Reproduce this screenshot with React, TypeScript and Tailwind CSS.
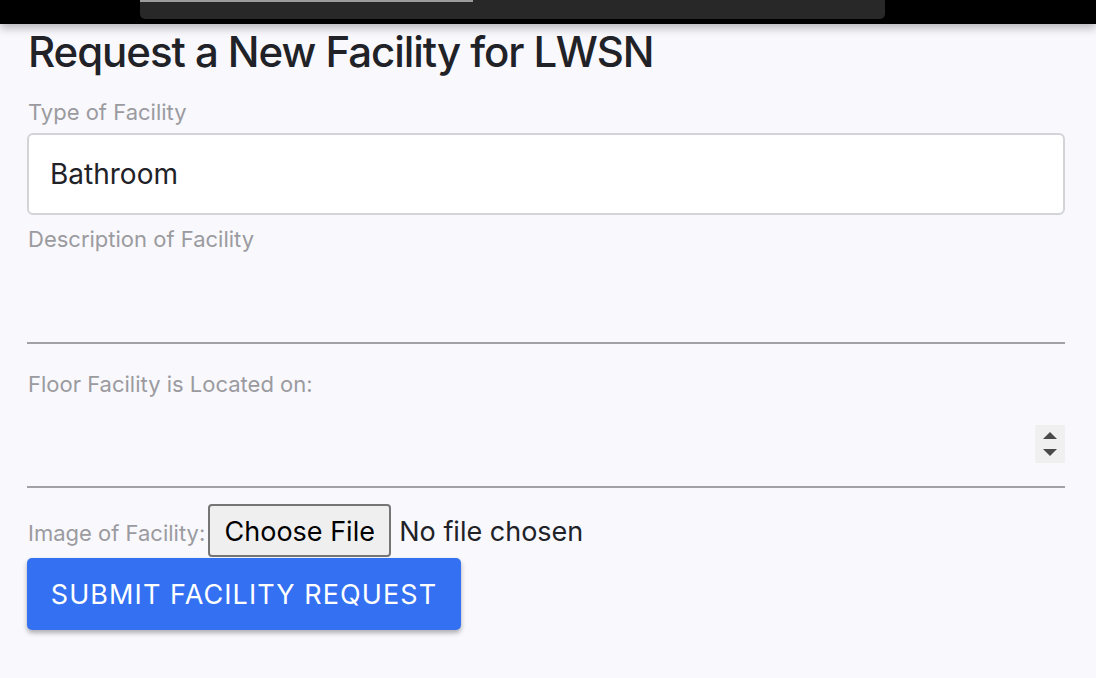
import React from "react";

const font = { fontFamily: "Inter, 'Noto Sans', sans-serif" };

const Label = ({ text, className = "" }: { text: string; className?: string }) => (
  <div className={`text-[22px] leading-[26px] text-[#9b9b9f] ${className}`}>{text}</div>
);

const App = () => {
  return (
    <div className="w-[1096px] h-[678px] overflow-hidden bg-[#f8f8fd] flex flex-col" style={font}>
      {/* top chrome bar */}
      <div className="relative z-10 h-6 shrink-0 bg-black pl-[140px] shadow-[0_4px_10px_rgba(0,0,0,0.28)]">
        <div className="w-[745px] h-[19px] rounded-b-[5px] bg-[#282828] overflow-hidden">
          <div className="w-[333px] h-[2px] bg-[#9c9c9c]" />
        </div>
      </div>

      <div className="flex flex-col pl-[27px] pr-[31px]">
        <h1 className="mt-[7px] ml-px text-[42px] leading-[42px] font-medium tracking-[-0.025em] text-[#212227]">
          Request a New Facility for LWSN
        </h1>

        <Label text="Type of Facility" className="mt-[26px] ml-px" />
        <div className="mt-[8px] h-[82px] rounded-md border-2 border-[#d2d4d8] bg-white flex items-center px-[21px]">
          <span className="text-[28px] text-[#212227]">Bathroom</span>
        </div>

        <Label text="Description of Facility" className="mt-[11px] ml-px" />
        <div className="h-[92px] border-b-2 border-[#a2a2a6]" />

        <Label text="Floor Facility is Located on:" className="mt-[27px] ml-px" />
        <div className="h-[91px] border-b-2 border-[#a2a2a6] flex items-start justify-end pt-[28px]">
          <div className="w-[30px] h-[38px] bg-[#f0f0f0] flex flex-col items-center justify-center gap-[10px]">
            <svg width="14" height="7" viewBox="0 0 14 7">
              <polygon points="7,0 14,7 0,7" fill="#4a4a4a" />
            </svg>
            <svg width="14" height="7" viewBox="0 0 14 7">
              <polygon points="0,0 14,0 7,7" fill="#4a4a4a" />
            </svg>
          </div>
        </div>

        <div className="mt-[16px] flex items-baseline">
          <span className="ml-px text-[22px] text-[#9b9b9f]">Image of Facility:</span>
          <button className="ml-[3px] h-[53px] w-[183px] rounded-[4px] border-2 border-[#767676] bg-[#efefef] pt-[3px] text-[27px] text-black">
            Choose File
          </button>
          <span className="ml-[8px] text-[27px] text-[#212227]">No file chosen</span>
        </div>

        <button className="mt-px h-[72px] w-[434px] rounded-[5px] bg-[#3370f2] pt-[2px] text-white text-[27px] tracking-[0.04em] shadow-[0_3px_5px_rgba(0,0,0,0.3)]">
          SUBMIT FACILITY REQUEST
        </button>
      </div>
    </div>
  );
};

export default App;
